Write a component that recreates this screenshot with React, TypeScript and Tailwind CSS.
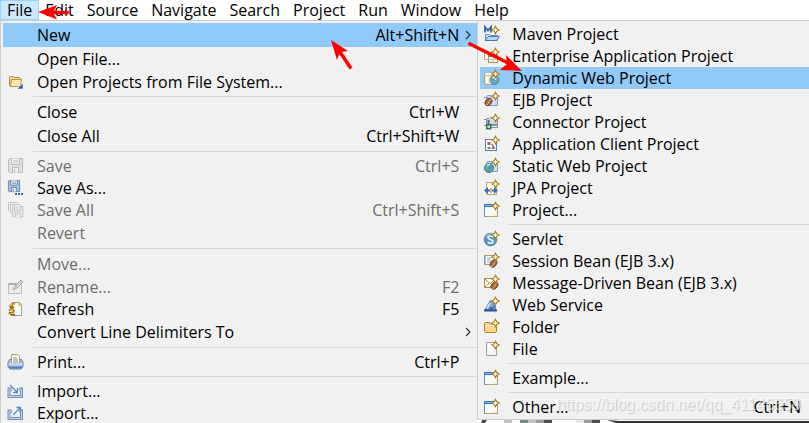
import type { ReactNode } from 'react'
import clsx from 'clsx'

type Item = {
    label: string
    shortcut?: string
    icon?: ReactNode
    disabled?: boolean
    active?: boolean
    submenu?: boolean
}

const menus = ['File', 'Edit', 'Source', 'Navigate', 'Search', 'Project', 'Run', 'Window', 'Help']

function Icon({ children }: { children: ReactNode }) {
    return (
        <svg viewBox="0 0 16 16" className="size-4 overflow-visible" aria-hidden="true">
            {children}
        </svg>
    )
}

// gold sparkle that marks every "new ..." wizard
function Spark() {
    return (
        <>
            <path d="M11.5 0.5l1.2 2.3 2.3 1.2-2.3 1.2-1.2 2.3-1.2-2.3L8 4l2.3-1.2z" fill="#fff3b0" stroke="#a8821c" strokeWidth="1.3" />
            <path d="M11.5 2v4M9.5 4h4" stroke="#fffbe4" strokeWidth="1" />
        </>
    )
}

function Bean({ x, y }: { x: number; y: number }) {
    return (
        <g transform={`translate(${x} ${y}) rotate(40)`}>
            <ellipse rx="3" ry="4.2" fill="#a8643a" stroke="#6e3818" strokeWidth="0.8" />
            <path d="M0.5-4c-2 3 2 4-0.5 8" fill="none" stroke="#f0c49c" strokeWidth="0.9" />
        </g>
    )
}

function BlueFolder() {
    return <path d="M2.5 13.5v-9l1-1h3l1 1.5h6v8.5z" fill="#cfdff2" stroke="#7d9cc8" />
}

function WizardIcon() {
    return (
        <Icon>
            <rect x="0.5" y="2.5" width="13" height="12" fill="#f6fbff" stroke="#6f8ba8" />
            <path d="M1 14.5h12.5v-7" fill="none" stroke="#b5a36a" />
            <path d="M0 2h13v3H0z" fill="#2f7cc4" />
            <path d="M1 3.5h9" stroke="#7fbdee" />
            <path d="M13 8v6H6c4-.5 6-2 7-6z" fill="#fff0bd" />
            <Spark />
        </Icon>
    )
}

function MavenIcon() {
    return (
        <Icon>
            <path d="M1.5 14.5v-6h4l1 1h7v5z" fill="#d6e7fa" stroke="#5f8ac4" />
            <path d="M1 14.5l3-4h11.5l-3 4z" fill="#b7d4f5" stroke="#4a78b8" />
            <path d="M1 6.5V1l3 3.5L7 1v5.5" fill="none" stroke="#36659f" strokeWidth="1.8" />
            <Spark />
        </Icon>
    )
}

function EnterpriseIcon() {
    return (
        <Icon>
            <path d="M0.5 11.5v-8h4l1 1h5v7z" fill="#fdf6df" stroke="#b9ab7d" />
            <rect x="4.5" y="6.5" width="9" height="8" fill="#f4f8fd" stroke="#b08f43" />
            <path d="M5 8h8" stroke="#4586c7" strokeWidth="2" />
            <path d="M9 11v3M6 11.5h6" stroke="#d8c690" />
            <Spark />
        </Icon>
    )
}

function DynamicWebIcon() {
    return (
        <Icon>
            <rect x="0.5" y="3.5" width="10" height="11" rx="2" fill="#f0e8c8" stroke="#aaa17d" />
            <ellipse cx="5.5" cy="4" rx="5" ry="1.8" fill="#fffdf2" stroke="#aaa17d" strokeWidth="0.8" />
            <path d="M3 7v6" stroke="#fffef5" strokeWidth="2.5" />
            <circle cx="10.5" cy="10" r="4.5" fill="#6ba5d8" stroke="#4d7cad" strokeWidth="0.8" />
            <path d="M8 8c2-2 3 1 1.5 2S8 12 7 10zM11.5 11l3-2c0 3-1 4-3 4z" fill="#6cab58" />
            <path d="M8.5 8c1-1 2-1 3-1v3" fill="none" stroke="#e2f2ff" strokeWidth="1.4" />
            <Spark />
        </Icon>
    )
}

function EjbIcon() {
    return (
        <Icon>
            <BlueFolder />
            <path d="M0 5.5h4" stroke="#7d9cc8" />
            <Bean x={4.5} y={10} />
            <Spark />
        </Icon>
    )
}

function ConnectorIcon() {
    return (
        <Icon>
            <path d="M2.5 10.5v-6h3l1-1h4v1h3v6z" fill="#cfdae8" stroke="#8294ad" />
            <path d="M0 5.5h3M0 11.5h14M7 13.5h7M13.5 7v6" stroke="#8490a0" />
            <path d="M4.5 6v5" stroke="#477752" strokeWidth="2" />
            <rect x="2.7" y="10.7" width="4" height="4" fill="#bce0b3" stroke="#356e42" strokeWidth="1.4" />
            <Spark />
        </Icon>
    )
}

function ClientIcon() {
    return (
        <Icon>
            <rect x="1.5" y="3.5" width="11" height="11" fill="#f8fcff" stroke="#5681b3" />
            <rect x="3.5" y="6" width="3" height="3" fill="#d94b46" />
            <path d="M9 9l2.5 4h-4z" fill="#d0524c" />
            <path d="M3.5 11h3v2h-3z" fill="#4ba455" />
            <path d="M7.5 8l2 2" stroke="#5489c5" strokeWidth="1.5" />
            <Spark />
        </Icon>
    )
}

function StaticWebIcon() {
    return (
        <Icon>
            <BlueFolder />
            <circle cx="5" cy="10" r="4.6" fill="#4f93d0" stroke="#396d9f" strokeWidth="0.8" />
            <path d="M2 8c3-2 4 0 2.5 2S3 13 1 10zM6 11l3-2c0 3-1 4-3 4z" fill="#70b15a" />
            <path d="M3 7.5c1-1 2-1 3-1" fill="none" stroke="#d7eeff" strokeWidth="1.5" />
            <Spark />
        </Icon>
    )
}

function JpaIcon() {
    return (
        <Icon>
            <path d="M2.5 14.5v-12h6l4 4v8z" fill="#fffdf3" stroke="#b6a26b" />
            <path d="M0 10.5L4 7v2.5h2v2H4V14z" fill="#3970b4" />
            <path d="M14 10.5L10 7v2.5H8v2h2V14z" fill="#3970b4" />
            <path d="M7 8v5" stroke="#d59b39" strokeWidth="1.5" />
            <Spark />
        </Icon>
    )
}

function ServletIcon() {
    return (
        <Icon>
            <circle cx="6.5" cy="8.5" r="6.3" fill="#5c96cb" stroke="#3d74a9" strokeWidth="0.8" />
            <path d="M2 6c2-4 6-4 8-2" fill="none" stroke="#9cc7eb" />
            <path d="M9 6C8 4.5 4 4.5 4 6.5S9 8.5 9 10.5 5 13 3.8 11" fill="none" stroke="#f4faff" strokeWidth="1.6" />
            <Spark />
        </Icon>
    )
}

function SessionBeanIcon() {
    return (
        <Icon>
            <path d="M0.5 2.5h11v9H0.5z" fill="#fbfdff" stroke="#a99862" />
            <path d="M3 5h5M3 7h4M3 9h3" stroke="#8ca8cb" />
            <path d="M1 3v8" stroke="#7390b4" />
            <Bean x={9.5} y={10.5} />
            <Spark />
        </Icon>
    )
}

function MessageBeanIcon() {
    return (
        <Icon>
            <path d="M0.5 3.5h12v9H0.5z" fill="#fffdf2" stroke="#aa8d47" />
            <path d="M1 4l5 4.5L12 4M1 12l4-4" fill="none" stroke="#aa8d47" />
            <Bean x={10.5} y={10.5} />
            <Spark />
        </Icon>
    )
}

function WebServiceIcon() {
    return (
        <Icon>
            <path d="M6 4L1 12.5h11L8.5 4z" fill="#89add9" stroke="#4768a2" strokeWidth="0.8" />
            <path d="M6 6L3 11.5" stroke="#dcecff" strokeWidth="1.5" />
            <path d="M0 13.5h13" stroke="#304f91" strokeWidth="2" />
            <path d="M5 12c0-3 5-3 5 0zM8 8l4 1-1 2" fill="#4267ad" />
            <Spark />
        </Icon>
    )
}

function FolderIcon() {
    return (
        <Icon>
            <path d="M0.5 12.5v-8l1-1h4l1 1.5h6v7.5l-1 1h-10z" fill="#f8d68c" stroke="#b8782f" />
            <path d="M1.5 6.5h10" stroke="#fff0c5" />
            <Spark />
        </Icon>
    )
}

function FileIcon() {
    return (
        <Icon>
            <path d="M2.5 1.5h10v13h-10z" fill="#eef4fd" stroke="#aaa180" />
            <path d="M4 3h5v8H4z" fill="#fafdff" />
            <Spark />
        </Icon>
    )
}

function OpenProjectsIcon() {
    return (
        <Icon>
            <path d="M1.5 11.5v-8l1-1h3l1 1h5l1 1v8h-10z" fill="#f6d58f" stroke="#b68543" />
            <path d="M2.5 12.5l1-7h10l-1 7z" fill="#fde6b0" stroke="#c2924c" />
            <path d="M15 9v6H9z" fill="#1f5d9e" stroke="#f4f4f4" strokeWidth="0.6" />
        </Icon>
    )
}

function FloppyShape({ stroke, fill, paper }: { stroke: string; fill: string; paper: string }) {
    return (
        <>
            <path d="M1.5 0.5h13v14h-13l-1-1v-12z" fill={fill} stroke={stroke} />
            <path d="M3.5 0.5v6h8v-6" fill={paper} stroke={stroke} />
            <path d="M5 2.5h5M5 4.5h5" stroke={stroke} strokeWidth="0.8" />
            <path d="M4.5 14.5v-5h6v5M6.5 11v3" fill={paper} stroke={stroke} />
        </>
    )
}

function SaveIcon() {
    return (
        <Icon>
            <FloppyShape stroke="#bcbcbc" fill="#e0e0e0" paper="#f2f2f2" />
        </Icon>
    )
}

function SaveAsIcon() {
    return (
        <Icon>
            <g transform="scale(.8)">
                <FloppyShape stroke="#54759b" fill="#a9c3df" paper="#eef5f8" />
            </g>
            <path d="M7 13h2v2H7zM10 13h2v2h-2zM13 13h2v2h-2z" fill="#4268a3" />
        </Icon>
    )
}

function SaveAllIcon() {
    return (
        <Icon>
            <path d="M0.5 9.5v-9h9l1 1M2.5 11.5v-9h9l1 1" fill="none" stroke="#c4c4c4" />
            <g transform="translate(4 4) scale(.75)">
                <FloppyShape stroke="#b8b8b8" fill="#e6e6e6" paper="#f4f4f4" />
            </g>
        </Icon>
    )
}

function RenameIcon() {
    return (
        <Icon>
            <path d="M0.5 4.5h13v10H0.5z" fill="#ededed" stroke="#bbb" />
            <path d="M0.5 5h8" stroke="#aaa" strokeWidth="2" />
            <path d="M5 11l2-4 6-6 2 2-6 6z" fill="#d0d0d0" stroke="#aaa" />
        </Icon>
    )
}

function RefreshIcon() {
    return (
        <Icon>
            <path d="M4.5 1.5h7l2 2v11h-9z" fill="#f6f9fd" stroke="#ab9f7d" />
            <path d="M10.5 1v4h4z" fill="#dfb85e" />
            <path d="M7 3c-4-1-5 2-2 3M2 4.5l1 2.5 3-1M1 9c4-2 7 1 3 2.5M6 9.5l-2 3-3-1 3 2.5h3" fill="none" stroke="#a76c16" strokeWidth="2" />
            <path d="M6.5 3.2c-3-1-4 1-3 2M2 9c3-1 5 0 2 2M3 12.5h3" fill="none" stroke="#f2c85d" />
        </Icon>
    )
}

function PrintIcon() {
    return (
        <Icon>
            <path d="M1.5 5.5h12l1.5 3v4l-2 2.5H2l-2-2.5v-4z" fill="#adc5e5" stroke="#657fae" />
            <path d="M3.5 9.5v-9h6l2 2v7z" fill="#fffdf0" stroke="#b79b50" />
            <path d="M5 4h4M5 6h5M5 8h5" stroke="#718dba" />
            <path d="M0.5 10h14" stroke="#edf5ff" />
            <path d="M1 13.5h13" stroke="#597bb6" strokeWidth="2" />
        </Icon>
    )
}

function TransferIcon({ out }: { out?: boolean }) {
    return (
        <Icon>
            <path d="M4 6H1v7.5h12.5V6H11" fill="none" stroke="#7190bd" strokeWidth="3" />
            <path d="M4 6H1v7.5h12.5V6H11" fill="none" stroke="#c3d5ed" />
            {out ? (
                <path d="M5 10l7-7M8.5 2.5h4v4" fill="none" stroke="#4d91bd" strokeWidth="1.3" />
            ) : (
                <path d="M2 2l7 7M9.5 5v4.5H5" fill="none" stroke="#4d91bd" strokeWidth="1.3" />
            )}
        </Icon>
    )
}

const fileGroups: Item[][] = [
    [
        { label: 'New', shortcut: 'Alt+Shift+N', active: true, submenu: true },
        { label: 'Open File...' },
        { label: 'Open Projects from File System...', icon: <OpenProjectsIcon /> },
    ],
    [
        { label: 'Close', shortcut: 'Ctrl+W' },
        { label: 'Close All', shortcut: 'Ctrl+Shift+W' },
    ],
    [
        { label: 'Save', shortcut: 'Ctrl+S', icon: <SaveIcon />, disabled: true },
        { label: 'Save As...', icon: <SaveAsIcon /> },
        { label: 'Save All', shortcut: 'Ctrl+Shift+S', icon: <SaveAllIcon />, disabled: true },
        { label: 'Revert', disabled: true },
    ],
    [
        { label: 'Move...', disabled: true },
        { label: 'Rename...', shortcut: 'F2', icon: <RenameIcon />, disabled: true },
        { label: 'Refresh', shortcut: 'F5', icon: <RefreshIcon /> },
        { label: 'Convert Line Delimiters To', submenu: true },
    ],
    [{ label: 'Print...', shortcut: 'Ctrl+P', icon: <PrintIcon /> }],
    [
        { label: 'Import...', icon: <TransferIcon /> },
        { label: 'Export...', icon: <TransferIcon out /> },
    ],
]

const newGroups: Item[][] = [
    [
        { label: 'Maven Project', icon: <MavenIcon /> },
        { label: 'Enterprise Application Project', icon: <EnterpriseIcon /> },
        { label: 'Dynamic Web Project', icon: <DynamicWebIcon />, active: true },
        { label: 'EJB Project', icon: <EjbIcon /> },
        { label: 'Connector Project', icon: <ConnectorIcon /> },
        { label: 'Application Client Project', icon: <ClientIcon /> },
        { label: 'Static Web Project', icon: <StaticWebIcon /> },
        { label: 'JPA Project', icon: <JpaIcon /> },
        { label: 'Project...', icon: <WizardIcon /> },
    ],
    [
        { label: 'Servlet', icon: <ServletIcon /> },
        { label: 'Session Bean (EJB 3.x)', icon: <SessionBeanIcon /> },
        { label: 'Message-Driven Bean (EJB 3.x)', icon: <MessageBeanIcon /> },
        { label: 'Web Service', icon: <WebServiceIcon /> },
        { label: 'Folder', icon: <FolderIcon /> },
        { label: 'File', icon: <FileIcon /> },
    ],
    [{ label: 'Example...', icon: <WizardIcon /> }],
    [{ label: 'Other...', shortcut: 'Ctrl+N', icon: <WizardIcon /> }],
]

function MenuItem({ item, wide }: { item: Item; wide?: boolean }) {
    return (
        <button
            role="menuitem"
            disabled={item.disabled}
            className={clsx(
                'flex w-full items-center whitespace-nowrap text-left',
                item.icon ? 'h-[22px]' : 'h-6',
                item.active && 'bg-[#91c9f7]',
                item.disabled ? 'text-[#6d6d6d]' : 'text-black',
                wide ? 'pr-2' : 'pr-[6px]',
            )}
        >
            <span className={clsx('shrink-0', wide ? 'w-8 pl-1' : 'w-[34px] pl-[5px]')}>{item.icon}</span>
            <span className="flex-1">{item.label}</span>
            <span>{item.shortcut}</span>
            {!wide && (
                <span className="flex w-3 justify-end">
                    {item.submenu && (
                        <svg viewBox="0 0 6 10" className="h-[10px] w-[6px]" aria-hidden="true">
                            <path d="M1 1l4 4-4 4" fill="none" stroke="#333" strokeWidth="1.2" />
                        </svg>
                    )}
                </span>
            )}
        </button>
    )
}

function Menu({ groups, label, wide }: { groups: Item[][]; label: string; wide?: boolean }) {
    return (
        <div role="menu" aria-label={label}>
            {groups.map((group, i) => (
                <div key={group[0].label}>
                    {i > 0 && <div role="separator" className={clsx('my-[3px] h-px bg-[#d7d7d7]', wide ? 'ml-7' : 'ml-[30px]')} />}
                    {group.map((item) => (
                        <MenuItem key={item.label} item={item} wide={wide} />
                    ))}
                </div>
            ))}
        </div>
    )
}

export default function App() {
    return (
        <div className="relative bg-white font-['Open_Sans','Noto_Sans',sans-serif] text-[16px] leading-5 text-black">
            <nav className="flex h-5 -space-x-px" aria-label="Main menu">
                {menus.map((name) => (
                    <button
                        key={name}
                        className={clsx(
                            'flex items-center border px-[6px]',
                            name === 'File' ? 'border-[#99d1ff] bg-[#cce8ff]' : 'border-transparent',
                        )}
                    >
                        {name}
                    </button>
                ))}
            </nav>

            <div className="grid grid-cols-[59fr_41fr]">
                <div className="border-t border-l border-[#ccc] bg-[#f1f1f1] pt-[2px] pl-[2px]">
                    <Menu groups={fileGroups} label="File" />
                </div>
                <div className="flex min-w-0 flex-col border-t border-[#ccc]">
                    <div className="relative border-b border-l border-[#ccc] bg-[#f1f1f1] pt-[2px] pb-[1px] pl-[2px]">
                        <Menu groups={newGroups} label="New" wide />
                        <span className="pointer-events-none absolute right-2 bottom-1 font-['Liberation_Sans',sans-serif] text-[16px] text-white/60 [text-shadow:1px_1px_1px_rgba(0,0,0,0.18)]">
                            https://blog.csdn.net/qq_41146659
                        </span>
                    </div>
                    {/* editor showing through under the submenu */}
                    <svg className="h-1 w-full" aria-hidden="true">
                        <path d="M5 0h5l-3 4H4z" fill="#444" />
                        <path d="M27 0h8v4h-8zM51 0h8v4h-8z" fill="#c4c4c4" />
                        <path d="M43 0h8v4h-8z" fill="#788589" />
                        <path d="M59 0h8v4h-8zM107 0h8v4h-8z" fill="#999" />
                        <path d="M67 0h8v4h-8zM115 0h8v4h-8z" fill="#505050" />
                        <path d="M99 0h8v4h-8z" fill="#e6e6e6" />
                        <path d="M130 0l12 4h400V1H142z" fill="#333" />
                    </svg>
                </div>
            </div>

            {/* red pointers drawn over the menus */}
            <svg className="pointer-events-none absolute top-0 left-0 h-20 w-[540px]" aria-hidden="true">
                <g stroke="#f00" strokeWidth="3.5" strokeLinecap="square">
                    <path d="M50 12.5h17" />
                    <path d="M340 52l10 15" />
                    <path d="M470 44l36 18" />
                </g>
                <path d="M38 12l19-7-4 7.5 4 7zM331 40l17 11-8 1-3 8zM522 71l-22-1 7-6-1-9z" fill="#f00" />
            </svg>
        </div>
    )
}
